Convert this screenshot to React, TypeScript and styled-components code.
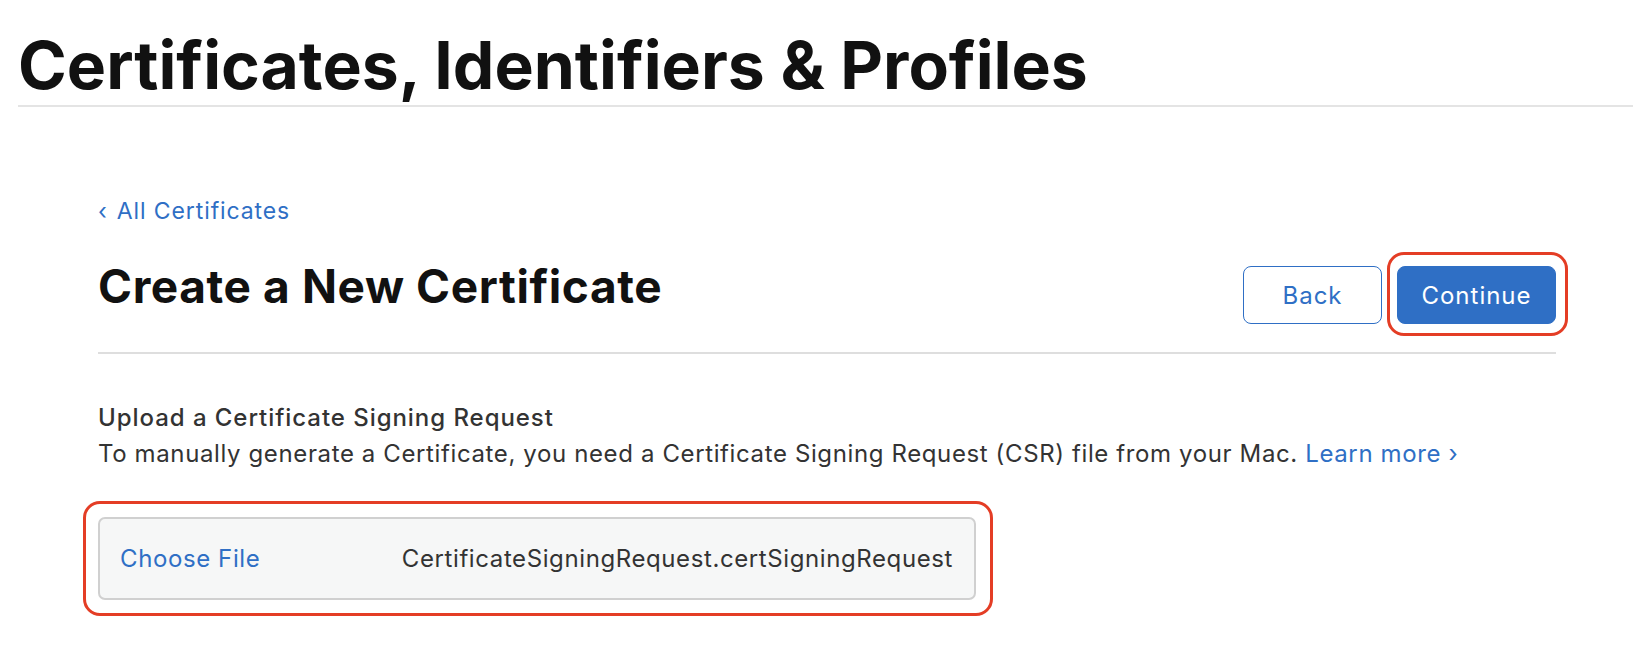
import React from "react";
import styled, { createGlobalStyle } from "styled-components";

const GlobalStyle = createGlobalStyle`
  body {
    margin: 0;
    background: #ffffff;
    font-family: Inter, "Noto Sans", "Liberation Sans", sans-serif;
    color: #1d1d1f;
  }
`;

const blue = "#2f6fc5";
const red = "#e43d25";

const Page = styled.div`
  width: 1652px;
  height: 664px;
  overflow: hidden;
`;

const TopBar = styled.header`
  margin: 0 19px 0 18px;
  padding-top: 25px;
  border-bottom: 2px solid #e4e4e4;
`;

const SiteTitle = styled.h1`
  margin: 0;
  font-size: 66px;
  line-height: 80px;
  font-weight: 700;
  color: #111111;
`;

const Main = styled.main`
  width: 1458px;
  margin-left: 98px;
`;

const BackLink = styled.a`
  display: inline-block;
  margin-top: 90px;
  font-size: 23px;
  line-height: 28px;
  letter-spacing: 0.9px;
  color: ${blue};
  text-decoration: none;
`;

const Chevron = styled.span`
  margin-right: 9px;
`;

const HeadRow = styled.div`
  display: flex;
  justify-content: space-between;
  align-items: flex-start;
  margin-top: 34px;
  padding-bottom: 28px;
  border-bottom: 2px solid #dedede;
`;

const PageTitle = styled.h2`
  margin: 0;
  font-size: 46px;
  line-height: 54px;
  font-weight: 700;
  letter-spacing: 0.6px;
  color: #111111;
`;

const Actions = styled.div`
  display: flex;
  gap: 15px;
  padding-top: 7px;
`;

const Button = styled.button<{ $primary?: boolean }>`
  height: 58px;
  padding: 0 20px;
  min-width: ${(p) => (p.$primary ? 159 : 139)}px;
  border-radius: 8px;
  border: 1.5px solid ${blue};
  background: ${(p) => (p.$primary ? blue : "#ffffff")};
  color: ${(p) => (p.$primary ? "#ffffff" : blue)};
  font-family: inherit;
  font-size: 24px;
  letter-spacing: 1px;
  cursor: pointer;
`;

const Marked = styled.div<{ $t: number; $r: number; $b: number; $l: number }>`
  position: relative;
  &::after {
    content: "";
    position: absolute;
    top: ${(p) => -p.$t}px;
    right: ${(p) => -p.$r}px;
    bottom: ${(p) => -p.$b}px;
    left: ${(p) => -p.$l}px;
    border: 3px solid ${red};
    border-radius: 17px;
    pointer-events: none;
  }
`;

const SectionTitle = styled.h3`
  margin: 46px 0 0;
  font-size: 24px;
  line-height: 36px;
  font-weight: 500;
  letter-spacing: 0.95px;
  color: #333333;
`;

const Note = styled.p`
  margin: 0;
  font-size: 24px;
  line-height: 36px;
  letter-spacing: 0.62px;
  color: #333333;
`;

const TextLink = styled.a`
  color: ${blue};
  text-decoration: none;
`;

const FileSlot = styled.div`
  margin-top: 45px;
  width: 878px;
`;

const FileBox = styled.div`
  box-sizing: border-box;
  height: 83px;
  display: flex;
  align-items: center;
  justify-content: space-between;
  padding: 0 21px 0 20px;
  background: #f6f7f7;
  border: 2px solid #d0d0d0;
  border-radius: 7px;
  font-size: 24px;
  letter-spacing: 0.6px;
`;

const ChooseFile = styled.span`
  color: ${blue};
`;

const FileName = styled.span`
  color: #333333;
`;

export default function App() {
  return (
    <Page>
      <GlobalStyle />
      <TopBar>
        <SiteTitle>Certificates, Identifiers &amp; Profiles</SiteTitle>
      </TopBar>
      <Main>
        <BackLink href="#">
          <Chevron>‹</Chevron>All Certificates
        </BackLink>
        <HeadRow>
          <PageTitle>Create a New Certificate</PageTitle>
          <Actions>
            <Button>Back</Button>
            <Marked $t={14} $r={12} $b={12} $l={10}>
              <Button $primary>Continue</Button>
            </Marked>
          </Actions>
        </HeadRow>
        <SectionTitle>Upload a Certificate Signing Request</SectionTitle>
        <Note>
          To manually generate a Certificate, you need a Certificate Signing
          Request (CSR) file from your Mac.{" "}
          <TextLink href="#">Learn more ›</TextLink>
        </Note>
        <FileSlot>
          <Marked $t={16} $r={17} $b={16} $l={15}>
            <FileBox>
              <ChooseFile>Choose File</ChooseFile>
              <FileName>CertificateSigningRequest.certSigningRequest</FileName>
            </FileBox>
          </Marked>
        </FileSlot>
      </Main>
    </Page>
  );
}
